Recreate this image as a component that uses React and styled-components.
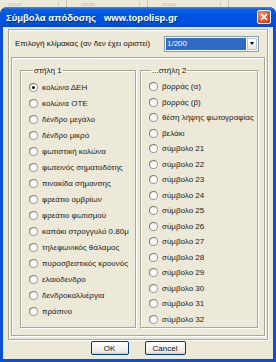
import React from 'react';
import styled, { createGlobalStyle } from 'styled-components';

const GlobalStyle = createGlobalStyle`
  html, body { margin: 0; padding: 0; }
  body {
    width: 276px;
    height: 362px;
    overflow: hidden;
    background: #ece9d8;
    font-family: "Liberation Sans", Arial, sans-serif;
  }
`;

const col1 = [
  'κολώνα ΔΕΗ',
  'κολώνα ΟΤΕ',
  'δένδρο μεγάλο',
  'δένδρο μικρό',
  'φωτιστική κολώνα',
  'φωτεινός σηματοδότης',
  'πινακίδα σήμανσης',
  'φρεάτιο ομβρίων',
  'φρεάτιο φωτισμού',
  'καπάκι στρογγυλό 0.80μ',
  'τηλεφωνικός θάλαμος',
  'πυροσβεστικός κρουνός',
  'ελαιόδενδρο',
  'δενδροκαλλιέργια',
  'πράσινο',
];

const col2 = [
  'βορράς (α)',
  'βορράς (β)',
  'θέση λήψης φωτογραφίας',
  'βελάκι',
  'σύμβολο 21',
  'σύμβολο 22',
  'σύμβολο 23',
  'σύμβολο 24',
  'σύμβολο 25',
  'σύμβολο 26',
  'σύμβολο 27',
  'σύμβολο 28',
  'σύμβολο 29',
  'σύμβολο 30',
  'σύμβολο 31',
  'σύμβολο 32',
];

// background app toolbar peeking above the dialog
const Desk = styled.div`
  height: 7px;
  overflow: hidden;
  display: flex;
  align-items: flex-end;
  background: #ece9d8;
`;
const DeskItem = styled.div`
  width: ${p => p.w}px;
  height: 7px;
  display: flex;
  align-items: center;
  border-right: 1px solid #c8c4b0;
  margin-right: 6px;
  span {
    font-size: 5px;
    line-height: 6px;
    color: #c2bfb0;
    margin-left: 8px;
    flex: 1;
  }
  i {
    width: 4px;
    height: 5px;
    border-left: 1px solid #d0ccb8;
    margin-right: 3px;
  }
`;

const Window = styled.div`
  height: 355px;
  display: flex;
  flex-direction: column;
  background: #0b4fd9;
  border-radius: 7px 7px 0 0;
  overflow: hidden;
`;
const TitleBar = styled.div`
  height: 20px;
  display: flex;
  align-items: center;
  padding: 0 5px 0 6px;
  background: linear-gradient(to bottom, #3f8cf3 0%, #0a5fe8 12%, #0055e5 40%, #0052dc 80%, #0247c9 100%);
`;
const Title = styled.div`
  flex: 1;
  color: #fff;
  font-weight: bold;
  font-size: 9.5px;
  white-space: pre;
  text-shadow: 1px 1px 0 #0a2a8a;
`;
const CloseBtn = styled.div`
  width: 12px;
  height: 12px;
  border: 1px solid #fff;
  border-radius: 2px;
  background: radial-gradient(circle at 35% 30%, #f29a7c 0%, #e3552d 55%, #c23410 100%);
  display: flex;
  align-items: center;
  justify-content: center;
`;

const Client = styled.div`
  flex: 1;
  margin: 0 3px 3px 3px;
  background: #ece9d8;
  display: flex;
  flex-direction: column;
  padding: 2px 5px 0 5px;
`;

const Etched = styled.div`
  border: 1px solid #aca899;
  box-shadow: inset 1px 1px 0 #fff, 1px 1px 0 #fff;
`;
const Panel = styled(Etched)`
  height: 306px;
  display: flex;
  flex-direction: column;
  padding: 0 2px 3px 2px;
`;
const ScaleRow = styled.div`
  height: 28px;
  display: flex;
  align-items: center;
  padding: 0 6px 0 4px;
  justify-content: space-between;
`;
const Label = styled.span`
  font-size: 8px;
  color: #111;
`;
const Combo = styled.div`
  width: 91px;
  height: 12px;
  border: 1px solid #7f9db9;
  background: #fff;
  display: flex;
  padding: 1px;
`;
const ComboValue = styled.div`
  flex: 1;
  background: #316ac5;
  color: #fff;
  font-size: 8px;
  line-height: 12px;
  padding-left: 1px;
`;
const ComboBtn = styled.div`
  width: 10px;
  margin-left: 1px;
  background: linear-gradient(to bottom, #ffffff, #e6e6e0);
  border: 1px solid #b8c4d8;
  box-sizing: border-box;
  display: flex;
  align-items: center;
  justify-content: center;
  &::after {
    content: '';
    border-left: 2.5px solid transparent;
    border-right: 2.5px solid transparent;
    border-top: 3px solid #000;
  }
`;

const Inner = styled(Etched)`
  flex: 1;
  display: flex;
  gap: 4px;
  padding: 8px 6px 7px 8px;
`;
const Group = styled.fieldset`
  margin: 0;
  width: ${p => p.w}px;
  box-sizing: border-box;
  border: 1px solid #aca899;
  box-shadow: inset 1px 1px 0 #fff, 1px 1px 0 #fff;
  padding: 4px 0 0 ${p => p.pl}px;
  display: flex;
  flex-direction: column;
  legend {
    font-size: 8px;
    color: #111;
    padding: 0 1px;
    margin-left: ${p => p.lm}px;
  }
`;
const Option = styled.label`
  height: ${p => p.h}px;
  display: flex;
  align-items: center;
  gap: 4px;
  font-size: 8px;
  color: #1a1a1a;
  white-space: nowrap;
`;
const Radio = styled.span`
  width: 9px;
  height: 9px;
  box-sizing: border-box;
  border-radius: 50%;
  border: 1px solid #9a9a94;
  border-top-color: #7a7a74;
  border-left-color: #7a7a74;
  background: radial-gradient(circle at 60% 60%, #ffffff 40%, #e8e6dc 100%);
  display: flex;
  align-items: center;
  justify-content: center;
  &::after {
    content: '';
    width: 3px;
    height: 3px;
    border-radius: 50%;
    background: ${p => (p.checked ? '#111' : 'transparent')};
  }
`;

const Buttons = styled.div`
  flex: 1;
  display: flex;
  justify-content: center;
  align-items: center;
  gap: 16px;
  padding-bottom: 3px;
`;
const Button = styled.div`
  width: ${p => p.w}px;
  height: 14px;
  box-sizing: border-box;
  border: 1px solid #003c74;
  border-radius: 2px;
  background: linear-gradient(to bottom, #ffffff, #ecebe6 80%, #d6d0c5);
  font-size: 8px;
  display: flex;
  align-items: center;
  justify-content: center;
  color: #111;
`;

export default function App() {
  return (
    <>
      <GlobalStyle />
      <Desk>
        <DeskItem w={66}><span>αγεμει</span><i /></DeskItem>
        <DeskItem w={74}><span>αγεμει</span><i /></DeskItem>
        <DeskItem w={74}><span>αγεμει</span><i /></DeskItem>
      </Desk>
      <Window>
        <TitleBar>
          <Title>Σύμβολα απόδοσης   www.topolisp.gr</Title>
          <CloseBtn>
            <svg width="8" height="8" viewBox="0 0 8 8">
              <path d="M1 1 L7 7 M7 1 L1 7" stroke="#fff" strokeWidth="1.6" />
            </svg>
          </CloseBtn>
        </TitleBar>
        <Client>
          <Panel>
            <ScaleRow>
              <Label>Επιλογή κλίμακας (αν δεν έχει οριστεί)</Label>
              <Combo>
                <ComboValue>1/200</ComboValue>
                <ComboBtn />
              </Combo>
            </ScaleRow>
            <Inner>
              <Group w={116} pl={8} lm={4}>
                <legend>στήλη 1</legend>
                {col1.map((t, i) => (
                  <Option key={t} h={16}>
                    <Radio checked={i === 0} />
                    {t}
                  </Option>
                ))}
              </Group>
              <Group w={118} pl={8} lm={2}>
                <legend>...στήλη 2</legend>
                {col2.map(t => (
                  <Option key={t} h={15.5}>
                    <Radio />
                    {t}
                  </Option>
                ))}
              </Group>
            </Inner>
          </Panel>
          <Buttons>
            <Button w={38}>OK</Button>
            <Button w={41}>Cancel</Button>
          </Buttons>
        </Client>
      </Window>
    </>
  );
}
